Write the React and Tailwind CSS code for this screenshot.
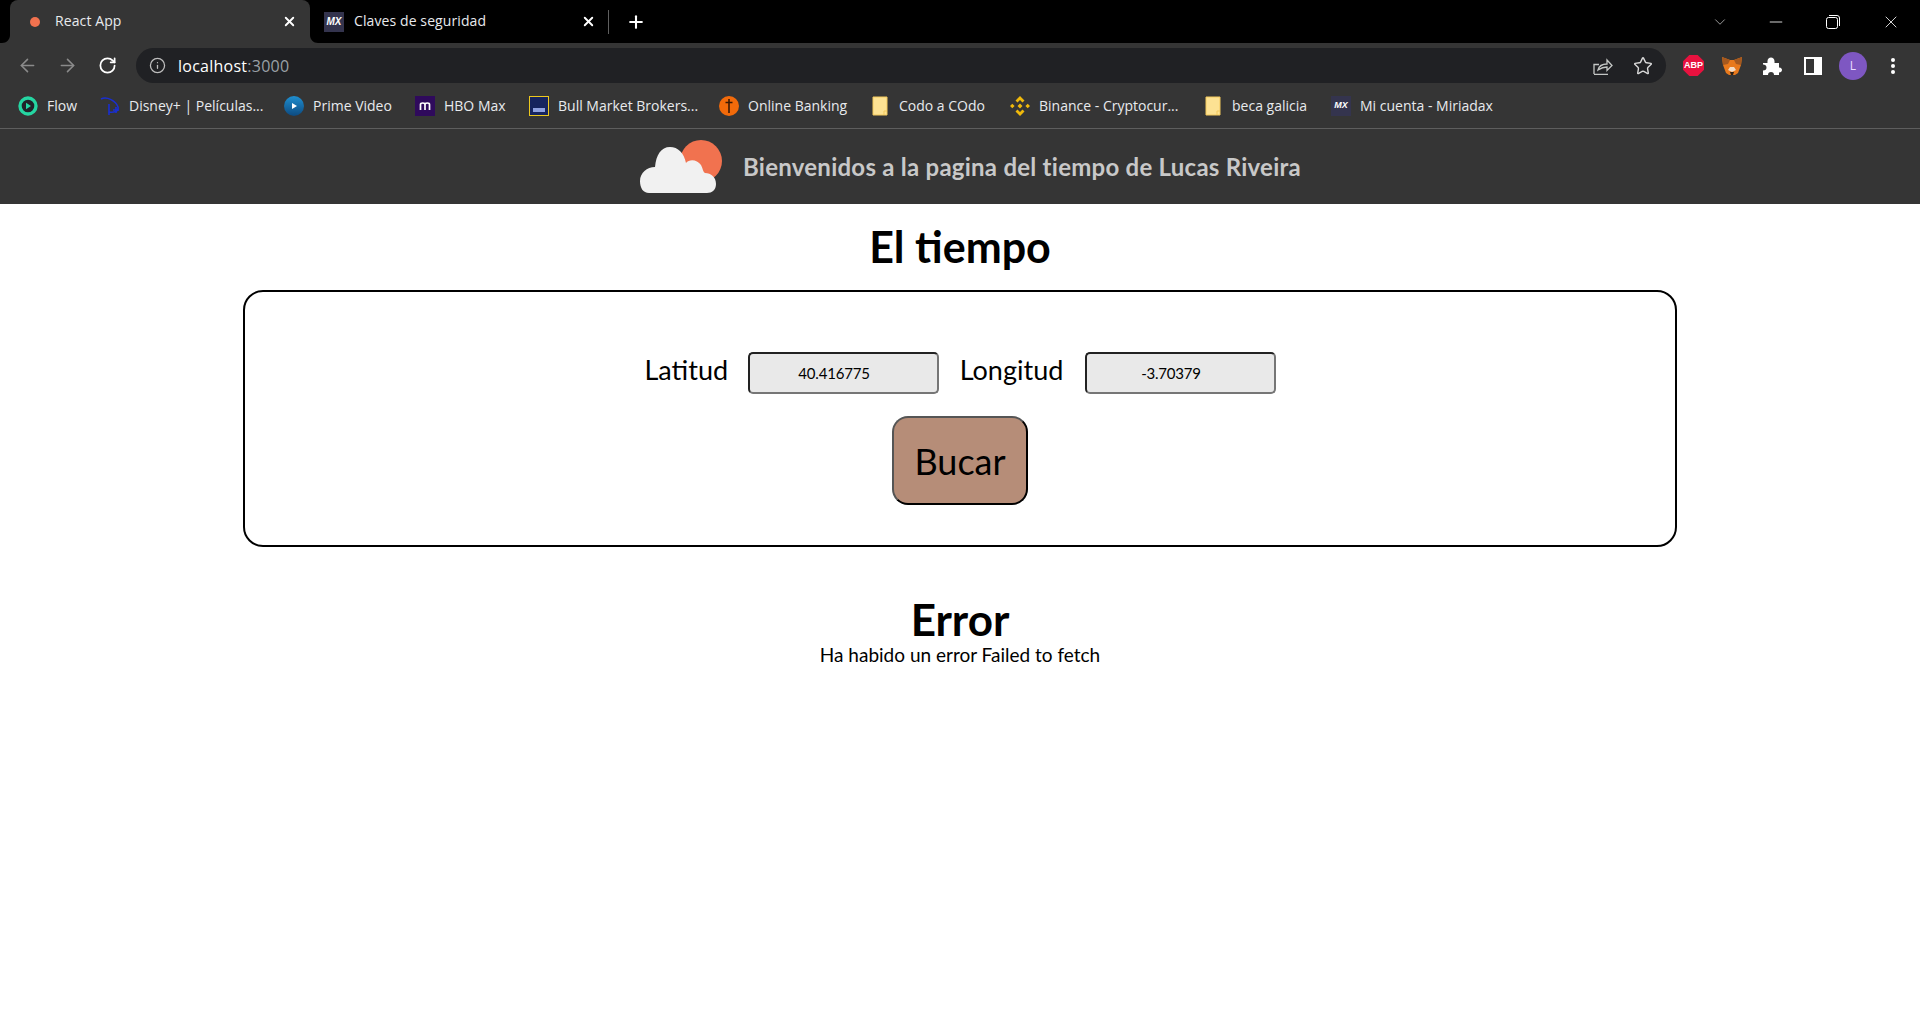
import React from 'react';
import { ArrowLeft, ArrowRight, RotateCw, Info, Star, X, Plus, ChevronDown, Minus } from 'lucide-react';

const MxIcon = ({ small }) => (
  <span className={`w-5 flex items-center justify-center bg-[#34344e] text-white italic font-black font-['Liberation_Sans',sans-serif] ${small ? 'h-5 text-[9px]' : 'h-5 text-[10px]'}`}>MX</span>
);

const FolderIcon = () => (
  <svg width="16" height="20" viewBox="0 0 16 20">
    <path d="M1 1h14v18H1z" fill="#fde293" stroke="#f3c95c" strokeWidth="1" />
    <path d="M12 19v-4h3" fill="none" stroke="#f3c95c" strokeWidth="1" />
  </svg>
);

const bookmarks = [
  {
    name: 'Flow', w: 'w-[31px]', ml: 'ml-[18px]',
    icon: (
      <svg width="20" height="20" viewBox="0 0 20 20">
        <circle cx="10" cy="10" r="8" fill="#20232a" stroke="#25d6a2" strokeWidth="3.4" />
        <path d="M8 6.8l5 3.2-5 3.2z" fill="#25d6a2" />
      </svg>
    ),
  },
  {
    name: 'Disney+ | Películas...', w: 'w-[133px]', ml: 'ml-[22px]',
    icon: (
      <svg width="20" height="20" viewBox="0 0 20 20" fill="none" stroke="#1a2fd0" strokeWidth="1.6">
        <path d="M1 3c6-3 15 2 17 8 1 4-4 6-9 5" />
        <path d="M9 8v11" />
        <path d="M13 14h6M16 11v6" />
      </svg>
    ),
  },
  {
    name: 'Prime Video', w: 'w-[81px]', ml: 'ml-[22px]',
    icon: (
      <svg width="20" height="20" viewBox="0 0 20 20">
        <defs>
          <linearGradient id="pv" x1="0" y1="0" x2="0" y2="1">
            <stop offset="0" stopColor="#1f8fd0" />
            <stop offset="1" stopColor="#0d4a80" />
          </linearGradient>
        </defs>
        <circle cx="10" cy="10" r="10" fill="url(#pv)" />
        <path d="M8 7l5 3-5 3z" fill="#fff" />
      </svg>
    ),
  },
  {
    name: 'HBO Max', w: 'w-[64px]', ml: 'ml-[21px]',
    icon: (
      <svg width="20" height="20" viewBox="0 0 20 20">
        <rect width="20" height="20" fill="#2f0a5c" />
        <path d="M5.5 14V8.5c0-2 4.5-2 4.5 0V14M10 8.500c0-2 4.500-2 4.500 0V14" fill="none" stroke="#fff" strokeWidth="1.700" />
      </svg>
    ),
  },
  {
    name: 'Bull Market Brokers...', w: 'w-[140px]', ml: 'ml-[21px]',
    icon: (
      <svg width="20" height="20" viewBox="0 0 20 20">
        <rect x="0.500" y="0.500" width="19" height="19" fill="#16245e" stroke="#ecc81e" />
        <rect x="4" y="12" width="12" height="4" fill="#8ea0e0" />
      </svg>
    ),
  },
  {
    name: 'Online Banking', w: 'w-[100px]', ml: 'ml-[21px]',
    icon: (
      <svg width="20" height="20" viewBox="0 0 20 20">
        <circle cx="10" cy="10" r="10" fill="#f26a0a" />
        <path d="M10 3v14M6.500 6.500h7" stroke="#3a1a05" strokeWidth="1.600" />
      </svg>
    ),
  },
  { name: 'Codo a COdo', w: 'w-[90px]', ml: 'ml-[24px]', gap: 'gap-[11px]', icon: <FolderIcon /> },
  {
    name: 'Binance - Cryptocur...', w: 'w-[144px]', ml: 'ml-[21px]',
    icon: (
      <svg width="20" height="20" viewBox="0 0 20 20" fill="#f0b90b">
        <path d="M10 0l4.500 4.500-2 2L10 4 7.500 6.500l-2-2zM10 20l-4.500-4.500 2-2L10 16l2.500-2.500 2 2zM0 10l2.300-2.300 2.300 2.300-2.300 2.300zM15.400 10l2.300-2.300L20 10l-2.300 2.300zM10 7.500l2.500 2.500-2.500 2.500L7.500 10z" />
      </svg>
    ),
  },
  { name: 'beca galicia', w: 'w-[77px]', ml: 'ml-[22px]', gap: 'gap-[11px]', icon: <FolderIcon /> },
  { name: 'Mi cuenta - Miriadax', w: 'w-[137px]', ml: 'ml-[22px]', icon: <MxIcon small /> },
];

const TabFlare = ({ flip }) => (
  <svg width="8" height="8" viewBox="0 0 8 8" className={`absolute bottom-0 ${flip ? 'right-[-8px] scale-x-[-1]' : 'left-[-8px]'}`}>
    <path d="M8 0v8H0c4.500 0 8-3.500 8-8z" fill="#353535" />
  </svg>
);

function BrowserChrome() {
  return (
    <div className="font-['Open_Sans',sans-serif] text-[14px] text-[#e8eaed]">
      {/* tabs */}
      <div className="h-[43px] bg-black flex items-center">
        <div className="relative ml-[10px] w-[300px] h-full bg-[#353535] rounded-t-lg flex items-center pl-[20px] pr-[13px]">
          <TabFlare />
          <TabFlare flip />
          <span className="w-[10px] h-[10px] rounded-full bg-[#f1724f]" />
          <span className="ml-[15px] flex-1 tracking-[0.1px] pb-[2px]">React App</span>
          <X size={15} strokeWidth={3} className="text-white" />
        </div>
        <div className="w-[298px] h-full flex items-center pl-[14px] pr-[12px]">
          <MxIcon />
          <span className="ml-[10px] flex-1 tracking-[0.1px] pb-[2px]">Claves de seguridad</span>
          <X size={15} strokeWidth={3} className="text-white" />
        </div>
        <span className="w-px h-[24px] bg-[#5f5f5f]" />
        <Plus size={20} strokeWidth={2.500} className="ml-[17px] text-white" />
        <div className="flex-1" />
        <ChevronDown size={18} strokeWidth={1} className="text-[#c8c8c8] mr-[37px]" />
        <Minus size={20} strokeWidth={1} className="text-white mr-[40px]" />
        <svg width="14" height="14" viewBox="0 0 14 14" fill="none" stroke="#fff" className="mr-[41px]">
          <rect x="0.500" y="2.500" width="11" height="11" rx="2" />
          <path d="M3 .5h8a2.500 2.500 0 0 1 2.500 2.500v8" />
        </svg>
        <X size={20} strokeWidth={1} className="text-white mr-[19px]" />
      </div>

      {/* toolbar */}
      <div className="bg-[#353535]">
        <div className="h-[40px] flex items-center pt-[5px]">
          <ArrowLeft size={21} strokeWidth={1.800} className="ml-[17px] text-[#8a8a8a]" />
          <ArrowRight size={21} strokeWidth={1.800} className="ml-[19px] text-[#8a8a8a]" />
          <RotateCw size={19} strokeWidth={2.200} className="ml-[20px] text-white" />
          <div className="ml-[19px] w-[1530px] h-[35px] rounded-full bg-[#202124] flex items-center pl-[13px] pr-[13px]">
            <Info size={17} strokeWidth={1.800} className="text-[#bdbdbd]" />
            <span className="ml-[12px] flex-1 text-[16px] tracking-[0.25px] text-white">
              localhost<span className="text-[#9aa0a6]">:3000</span>
            </span>
            <svg width="20" height="19" viewBox="0 0 20 19" fill="none" stroke="#c4c7c5" strokeWidth="1.300">
              <path d="M1 18.300h14M1 18V8.500h5M5 14c1-4 5-6 9-6V4l5 5.500-5 5V11c-3 0-6 1-9 3z" />
            </svg>
            <Star size={20} strokeWidth={1.700} className="ml-[20px] text-[#d8d8d8]" />
          </div>
          <span className="ml-[17px] w-[21px] h-[21px] bg-[#e8123f] [clip-path:polygon(30%_0,70%_0,100%_30%,100%_70%,70%_100%,30%_100%,0_70%,0_30%)] flex items-center justify-center text-white text-[9px] font-bold font-['Liberation_Sans',sans-serif]">ABP</span>
          <svg width="20" height="19" viewBox="0 0 20 19" className="ml-[18px]">
            <path d="M0 1l8 3h4l8-3-1 8-3 8-3 2H7l-3-2-3-8z" fill="#e8791c" />
            <path d="M0 1l8 3-2 4-5 1zM20 1l-8 3 2 4 5 1z" fill="#a5591f" />
            <path d="M8 16h4l-1 3H9z" fill="#2c2017" />
            <path d="M6 14l4 2 4-2-2-3H8z" fill="#f3dcc5" />
          </svg>
          <svg width="20" height="20" viewBox="0 0 20 20" fill="#fff" className="ml-[20px]">
            <path d="M1 7h4.500C5 3 7 1.500 9 1.500S13 3 12.500 7H17v4.500c2.500 0 3 1.500 3 2.500s-1 2.500-3 2.500V19h-5c0-2-1-3-3-3s-3 1-3 3H1v-4.500c2.500 0 3.500-1 3.500-3S3 8.500 1 8.500z" />
          </svg>
          <svg width="18" height="18" viewBox="0 0 18 18" className="ml-[22px]">
            <path d="M0 0h18v18H0zM2 2v14h8V2z" fill="#fff" fillRule="evenodd" />
          </svg>
          <span className="ml-[17px] w-[28px] h-[28px] rounded-full bg-[#7e57c2] flex items-center justify-center text-[#e8dcff] text-[12px]">L</span>
          <svg width="4" height="16" viewBox="0 0 4 16" fill="#fff" className="ml-[24px]">
            <circle cx="2" cy="2" r="2" />
            <circle cx="2" cy="8" r="2" />
            <circle cx="2" cy="14" r="2" />
          </svg>
        </div>
        {/* bookmarks */}
        <div className="h-[45px] flex items-center">
          {bookmarks.map((b) => (
            <div key={b.name} className={`flex items-center ${b.ml} ${b.gap || 'gap-[9px]'}`}>
              {b.icon}
              <span className={`${b.w} whitespace-nowrap`}>{b.name}</span>
            </div>
          ))}
        </div>
      </div>
      <div className="h-px bg-[#5e5e5e]" />
    </div>
  );
}

function CloudLogo() {
  return (
    <svg width="84" height="56" viewBox="0 0 84 56">
      <circle cx="62" cy="22" r="21" fill="#f1724f" />
      <path d="M10 54C4 54 1 49 1 42C1 34 8 28 16 28C17 16 22 8 31 8C39 8 45 14 47 24C50 20 58 20 62 26C64 30 64 33 66 34C72 34 77 38 77 45C77 51 73 54 68 54Z" fill="#f1f1f1" />
    </svg>
  );
}

export default function App() {
  return (
    <div className="min-h-[1020px] bg-white font-['Lato',sans-serif] text-black">
      <BrowserChrome />
      <header className="h-[75px] bg-[#353535] flex items-center justify-center gap-[20px] pl-[20px]">
        <CloudLogo />
        <h2 className="text-[24px] tracking-[0.25px] font-bold text-[#c8c8c8]">Bienvenidos a la pagina del tiempo de Lucas Riveira</h2>
      </header>
      <h1 className="h-[86px] flex items-center justify-center text-[43px] font-bold">El tiempo</h1>
      <section className="mx-[243px] h-[257px] border-2 border-black rounded-[20px] flex flex-col items-center pt-[60px]">
        <div className="flex items-center gap-[21px]">
          <label className="w-[82px] text-center whitespace-nowrap text-[27px] leading-[34px] pb-[6px]">Latitud</label>
          <input
            readOnly
            value="40.416775"
            className="w-[191px] h-[42px] bg-[#e9e9e9] border-2 border-t-[#222] border-l-[#222] border-r-[#767676] border-b-[#767676] rounded-[5px] text-center pr-[18px] text-[15px] tracking-[-0.2px] outline-none"
          />
          <label className="w-[104px] text-center whitespace-nowrap text-[27px] leading-[34px] pb-[6px]">Longitud</label>
          <input
            readOnly
            value="-3.70379"
            className="w-[191px] h-[42px] bg-[#e9e9e9] border-2 border-t-[#222] border-l-[#222] border-r-[#767676] border-b-[#767676] rounded-[5px] text-center pr-[18px] text-[15px] tracking-[-0.2px] outline-none"
          />
        </div>
        <button className="mt-[22px] w-[136px] h-[89px] bg-[#b68d78] border-2 border-t-[#555] border-l-[#555] border-r-black border-b-black rounded-[16px] text-[36px]">
          Bucar
        </button>
      </section>
      <div className="mt-[49px] text-center">
        <h3 className="text-[44px] leading-[46px] font-bold">Error</h3>
        <p className="mt-[2px] text-[19px] leading-[22px]">Ha habido un error Failed to fetch</p>
      </div>
    </div>
  );
}
